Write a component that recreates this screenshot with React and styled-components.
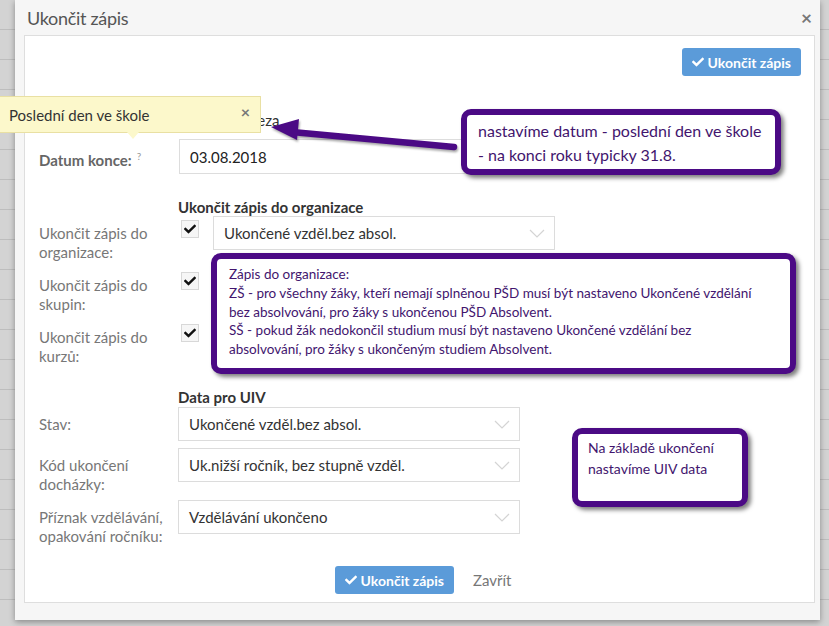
import React from "react";
import styled, { createGlobalStyle } from "styled-components";
import { FaCheck } from "react-icons/fa";

const GlobalStyle = createGlobalStyle`
  html, body {
    margin: 0;
    padding: 0;
    background: #cfcfcf;
  }
  body {
    font-family: "Lato", "Open Sans", sans-serif;
  }
`;

const Page = styled.div`
  position: relative;
  width: 829px;
  height: 626px;
  overflow: hidden;
  background-color: #d3d3d3;
  background-image: repeating-linear-gradient(
    to bottom,
    transparent 0,
    transparent 29px,
    #bdbdbd 29px,
    #bdbdbd 30px
  );
  display: flex;
  align-items: flex-start;
`;

const Modal = styled.div`
  margin-left: 15px;
  width: 805px;
  height: 620px;
  background: #f6f6f6;
  box-shadow: 0 2px 6px rgba(0, 0, 0, 0.35);
  display: flex;
  flex-direction: column;
`;

const Header = styled.div`
  height: 35px;
  display: flex;
  align-items: center;
  justify-content: space-between;
  padding: 0 8px 0 12px;
`;

const Title = styled.div`
  font-size: 18px;
  font-weight: 400;
  color: #555;
  letter-spacing: -0.3px;
`;

const Close = styled.span`
  font-size: 19px;
  font-weight: 700;
  color: #777;
  line-height: 1;
`;

const Panel = styled.div`
  margin: 0 5px 0 9px;
  height: 568px;
  box-sizing: border-box;
  background: #fff;
  border: 1px solid #dedede;
  padding: 12px 13px 0 14px;
  display: flex;
  flex-direction: column;
`;

const TopBar = styled.div`
  display: flex;
  justify-content: flex-end;
`;

const Button = styled.button`
  height: 28px;
  padding: 0 10px;
  border: none;
  border-radius: 3px;
  background: #5b9bd9;
  color: #fff;
  font-family: "Lato", sans-serif;
  font-size: 14px;
  font-weight: 700;
  display: inline-flex;
  align-items: center;
  gap: 4px;
  svg {
    width: 12px;
    height: 12px;
  }
`;

const Section = styled.div`
  display: flex;
  flex-direction: column;
  gap: ${(p) => p.$gap ?? 6}px;
  margin-top: ${(p) => p.$top ?? 0}px;
`;

const Row = styled.div`
  display: grid;
  grid-template-columns: 139px auto;
  min-height: ${(p) => p.$h ?? 34}px;
`;

const Label = styled.div`
  padding-top: 8px;
  font-size: 15px;
  line-height: 19px;
  color: ${(p) => (p.$bold ? "#666" : "#777")};
  font-weight: ${(p) => (p.$bold ? 700 : 400)};
`;

const Help = styled.sup`
  font-size: 10px;
  font-weight: 400;
  color: #999;
  margin-left: 5px;
`;

const Hint = styled.div`
  font-size: 15px;
  line-height: 20px;
  color: #333;
`;

const SectionTitle = styled.div`
  padding-left: 139px;
  font-size: 15px;
  font-weight: 700;
  line-height: 18px;
  color: #333;
`;

const Input = styled.div`
  width: 342px;
  height: 35px;
  box-sizing: border-box;
  border: 1px solid #dddddd;
  padding: 0 10px;
  display: flex;
  align-items: center;
  font-size: 15px;
  color: #222;
  margin-left: 1px;
`;

const SelectBox = styled.div`
  position: relative;
  width: 342px;
  height: 34px;
  box-sizing: border-box;
  border: 1px solid #dcdcdc;
  padding: 0 10px;
  display: flex;
  align-items: center;
  font-size: 15px;
  color: #333;
  svg {
    position: absolute;
    right: 9px;
    top: 12px;
  }
`;

const Chevron = () => (
  <svg width="16" height="9" viewBox="0 0 16 9">
    <path d="M1 1l7 7 7-7" fill="none" stroke="#d4d4d4" strokeWidth="1.2" />
  </svg>
);

const Select = ({ children }) => (
  <SelectBox>
    {children}
    <Chevron />
  </SelectBox>
);

const CheckLine = styled.div`
  display: flex;
  align-items: flex-start;
  gap: 14px;
  padding-left: 3px;
`;

const Checkbox = styled.span`
  margin-top: 4px;
  width: 18px;
  height: 18px;
  box-sizing: border-box;
  border: 1px solid #d8d8d8;
  background: #f6f6f6;
  display: flex;
  align-items: center;
  justify-content: center;
  svg {
    width: 12px;
    height: 12px;
    color: #111;
  }
`;

const Footer = styled.div`
  margin-top: 20px;
  display: flex;
  justify-content: center;
  align-items: center;
  gap: 19px;
  padding-left: 6px;
`;

const LinkButton = styled.span`
  font-size: 15px;
  color: #777;
`;

/* overlays placed on top of the dialog */

const Tooltip = styled.div`
  position: absolute;
  left: -1px;
  top: 96px;
  width: 262px;
  height: 37px;
  box-sizing: border-box;
  background: #fcf8cb;
  border: 1px solid #e9e0a3;
  padding: 0 9px;
  display: flex;
  align-items: center;
  justify-content: space-between;
  font-size: 15px;
  color: #333;
  &::after {
    content: "";
    position: absolute;
    left: 127px;
    bottom: -7px;
    border-left: 6px solid transparent;
    border-right: 6px solid transparent;
    border-top: 7px solid #fcf8cb;
  }
`;

const TipClose = styled.span`
  font-size: 16px;
  font-weight: 700;
  color: #777;
  margin-top: -7px;
  margin-right: 1px;
`;

const Callout = styled.div`
  position: absolute;
  left: ${(p) => p.$x}px;
  top: ${(p) => p.$y}px;
  width: ${(p) => p.$w}px;
  height: ${(p) => p.$h}px;
  box-sizing: border-box;
  background: #fff;
  border: 6px solid #4b0a85;
  border-radius: 10px;
  box-shadow: 3px 3px 4px rgba(0, 0, 0, 0.5);
  padding: ${(p) => p.$pad};
  font-family: "Lato", sans-serif;
  font-size: ${(p) => p.$fs}px;
  line-height: ${(p) => p.$lh}px;
  color: #42156e;
`;

const ArrowSvg = styled.svg`
  position: absolute;
  left: 260px;
  top: 110px;
  filter: drop-shadow(1px 2px 1px rgba(0, 0, 0, 0.35));
`;

const Arrow = () => (
  <ArrowSvg width="210" height="50" viewBox="260 110 210 50">
    <line
      x1="292"
      y1="132"
      x2="454"
      y2="147"
      stroke="#4b0a85"
      strokeWidth="6.5"
      strokeLinecap="round"
    />
    <polygon points="271,127 299,119 297,140" fill="#4b0a85" />
  </ArrowSvg>
);

const App = () => {
  return (
    <>
      <GlobalStyle />
      <Page>
        <Modal>
          <Header>
            <Title>Ukončit zápis</Title>
            <Close>×</Close>
          </Header>
          <Panel>
            <TopBar>
              <Button>
                <FaCheck />
                Ukončit zápis
              </Button>
            </TopBar>

            <Section $top={34} $gap={9}>
              <Row $h={20}>
                <span />
                <Hint>Datum z výreza</Hint>
              </Row>
              <Row $h={35}>
                <Label $bold>
                  Datum konce:<Help>?</Help>
                </Label>
                <Input>03.08.2018</Input>
              </Row>
            </Section>

            <Section $top={24} $gap={0}>
              <SectionTitle>Ukončit zápis do organizace</SectionTitle>
              <Section $gap={6}>
                <Row $h={46}>
                  <Label>
                    Ukončit zápis do
                    <br />
                    organizace:
                  </Label>
                  <CheckLine>
                    <Checkbox>
                      <FaCheck />
                    </Checkbox>
                    <Select>Ukončené vzděl.bez absol.</Select>
                  </CheckLine>
                </Row>
                <Row $h={46}>
                  <Label>
                    Ukončit zápis do
                    <br />
                    skupin:
                  </Label>
                  <CheckLine>
                    <Checkbox>
                      <FaCheck />
                    </Checkbox>
                  </CheckLine>
                </Row>
                <Row $h={46}>
                  <Label>
                    Ukončit zápis do
                    <br />
                    kurzů:
                  </Label>
                  <CheckLine>
                    <Checkbox>
                      <FaCheck />
                    </Checkbox>
                  </CheckLine>
                </Row>
              </Section>
            </Section>

            <Section $top={22} $gap={1}>
              <SectionTitle>Data pro UIV</SectionTitle>
              <Section $gap={7}>
                <Row>
                  <Label>Stav:</Label>
                  <Select>Ukončené vzděl.bez absol.</Select>
                </Row>
                <Section $gap={6}>
                  <Row $h={46}>
                    <Label>
                      Kód ukončení
                      <br />
                      docházky:
                    </Label>
                    <Select>Uk.nižší ročník, bez stupně vzděl.</Select>
                  </Row>
                  <Row $h={46}>
                    <Label>
                      Příznak vzdělávání,
                      <br />
                      opakování ročníku:
                    </Label>
                    <Select>Vzdělávání ukončeno</Select>
                  </Row>
                </Section>
              </Section>
            </Section>

            <Footer>
              <Button>
                <FaCheck />
                Ukončit zápis
              </Button>
              <LinkButton>Zavřít</LinkButton>
            </Footer>
          </Panel>
        </Modal>

        <Tooltip>
          Poslední den ve škole
          <TipClose>×</TipClose>
        </Tooltip>

        <Arrow />

        <Callout $x={461} $y={109} $w={320} $h={66} $pad="4px 10px 0 11px" $fs={16} $lh={24}>
          nastavíme datum - poslední den ve škole
          <br />- na konci roku typicky 31.8.
        </Callout>

        <Callout $x={211} $y={253} $w={585} $h={121} $pad="6px 8px 0 12px" $fs={13.5} $lh={18.8}>
          Zápis do organizace:
          <br />
          ZŠ - pro všechny žáky, kteří nemají splněnou PŠD musí být nastaveno Ukončené vzdělání
          <br />
          bez absolvování, pro žáky s ukončenou PŠD Absolvent.
          <br />
          SŠ - pokud žák nedokončil studium musí být nastaveno Ukončené vzdělání bez
          <br />
          absolvování, pro žáky s ukončeným studiem Absolvent.
        </Callout>

        <Callout $x={572} $y={428} $w={176} $h={79} $pad="3px 6px 0 10px" $fs={14} $lh={21}>
          Na základě ukončení
          <br />
          nastavíme UIV data
        </Callout>
      </Page>
    </>
  );
};

export default App;
